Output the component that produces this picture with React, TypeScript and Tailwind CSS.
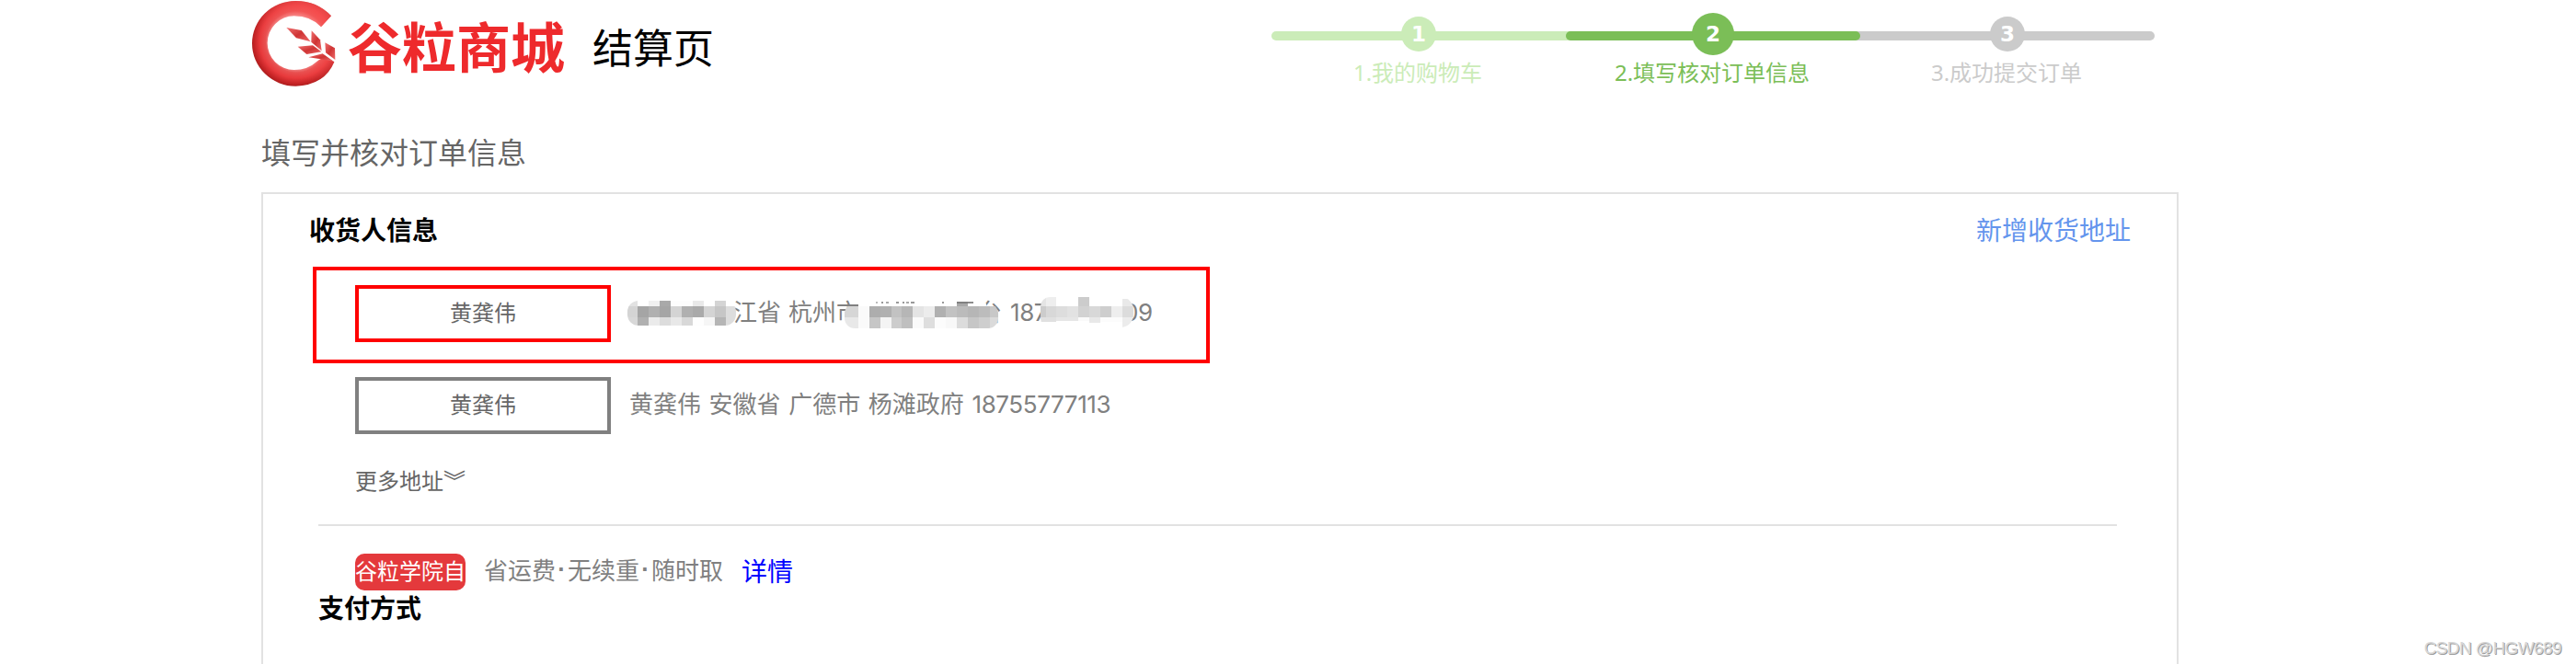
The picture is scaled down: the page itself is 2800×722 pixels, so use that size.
import React from "react";

const CJK = "font-['Noto_Sans_CJK_SC',sans-serif]";
const MIXED = "font-['Inter','Noto_Sans_CJK_SC',sans-serif]";

function LogoMark() {
  return (
    <svg className="h-[100px] w-[98px] shrink-0" viewBox="0 0 294 300">
      <defs>
        <radialGradient id="ring" gradientUnits="userSpaceOnUse" cx="162" cy="136" r="148">
          <stop offset="0.58" stopColor="#f29a9a" />
          <stop offset="0.68" stopColor="#e85050" />
          <stop offset="0.8" stopColor="#e83a3c" />
          <stop offset="0.92" stopColor="#c62426" />
          <stop offset="1" stopColor="#a81c1c" />
        </radialGradient>
        <linearGradient id="shine" x1="0" y1="1" x2="1" y2="0">
          <stop offset="0.35" stopColor="#ff5a5a" stopOpacity="0" />
          <stop offset="1" stopColor="#ff5a5a" stopOpacity="0.75" />
        </linearGradient>
        <linearGradient id="leaf" x1="0" y1="0" x2="1" y2="1">
          <stop offset="0" stopColor="#f07070" />
          <stop offset="0.5" stopColor="#cf3434" />
          <stop offset="1" stopColor="#ee6a6a" />
        </linearGradient>
      </defs>
      {["url(#ring)", "url(#shine)"].map((fill) => (
        <path
          key={fill}
          fill={fill}
          d="M276 52 Q230 3 160 3 A142 139 0 0 0 18 142 A142 139 0 0 0 160 281 Q255 278 286 202 L262 189 Q240 189 228 202 Q200 228 155 228 A87 88 0 0 1 68 140 A87 88 0 0 1 155 52 Q210 52 243 88 Z"
        />
      ))}
      <g fill="url(#leaf)">
        <path d="M130 90 L179 99 L209 136 L162 124 Z" />
        <path d="M212 100 L240 130 L245 166 L211 137 Z" />
        <path d="M167 152 L216 148 L244 169 L196 177 Z" />
        <path d="M256 139 L288 157 L289 195 L258 172 Z" />
        <path d="M202 187 L248 175 L284 200 L238 192 Z" />
      </g>
    </svg>
  );
}

type StepProps = { n: number; label: string; bar: string; circle: string; text: string };

function Step({ n, label, bar, circle, text }: StepProps) {
  return (
    <li className="relative flex w-[320px] flex-col items-center pt-[14px]">
      <span className={`absolute top-[34px] h-[10px] ${bar}`} />
      <span className="relative flex h-[46px] items-center">
        <span
          className={`flex items-center justify-center rounded-full font-['DejaVu_Sans',sans-serif] text-[23px] font-bold leading-none text-white ${circle}`}
        >
          {n}
        </span>
      </span>
      <span className={`relative -left-px font-['Noto_Sans','Noto_Sans_CJK_SC',sans-serif] text-[24px] leading-[38px] whitespace-nowrap ${text}`}>
        {label}
      </span>
    </li>
  );
}

type Cell = [number, number, number, number, string];

const MASK_A: Cell[] = [
  [0, 0, 11, 6, "#e2e2e2"], [11, 0, 12, 6, "#fff"], [23, 0, 12, 6, "#f0f0f0"], [35, 0, 12, 6, "#a9a9a9"], [47, 0, 24, 6, "#fdfdfd"], [71, 0, 12, 6, "#e9e9e9"], [83, 0, 12, 6, "#fff"], [95, 0, 12, 6, "#d4d4d4"], [107, 0, 11, 6, "#fff"],
  [0, 6, 11, 12, "#d4d4d4"], [11, 6, 12, 12, "#a5a5a5"], [23, 6, 12, 12, "#b0b0b0"], [35, 6, 12, 12, "#a5a5a5"], [47, 6, 12, 12, "#d4d4d4"], [59, 6, 12, 12, "#b0b0b0"], [71, 6, 12, 12, "#aaaaaa"], [83, 6, 12, 12, "#d4d4d4"], [95, 6, 12, 12, "#c6c6c6"], [107, 6, 11, 12, "#dddddd"],
  [0, 18, 11, 9, "#d8d8d8"], [11, 18, 12, 9, "#b0b0b0"], [23, 18, 12, 9, "#ebebeb"], [35, 18, 12, 9, "#dcdcdc"], [47, 18, 12, 9, "#e8e8e8"], [59, 18, 12, 9, "#d8d8d8"], [71, 18, 12, 9, "#fefefe"], [83, 18, 12, 9, "#f6f6f6"], [95, 18, 12, 9, "#b5b5b5"], [107, 18, 11, 9, "#dddddd"],
];

const MASK_B: Cell[] = [
  [15, 0, 107, 3, "#fff"], [122, 0, 12, 3, "#a8a8a8"], [134, 0, 20, 3, "#fff"],
  [0, 3, 15, 12, "#d6d6d6"], [15, 3, 12, 12, "#fafafa"], [27, 3, 12, 12, "#adadad"], [39, 3, 12, 12, "#b0b0b0"], [51, 3, 11, 12, "#c2c2c2"], [62, 3, 12, 12, "#b6b6b6"], [74, 3, 12, 12, "#e4e4e4"], [86, 3, 12, 12, "#ececec"], [98, 3, 12, 12, "#b0b0b0"], [110, 3, 12, 12, "#c2c2c2"], [122, 3, 12, 12, "#bbbbbb"], [134, 3, 12, 12, "#b6b6b6"], [146, 3, 12, 12, "#bcbcbc"], [158, 3, 9, 12, "#c8c8c8"],
  [0, 15, 15, 12, "#e8e8e8"], [15, 15, 12, 12, "#fafafa"], [27, 15, 12, 12, "#c6c6c6"], [39, 15, 12, 12, "#f4f4f4"], [51, 15, 11, 12, "#cccccc"], [62, 15, 12, 12, "#bfbfbf"], [74, 15, 12, 12, "#fafafa"], [86, 15, 12, 12, "#dedede"], [98, 15, 12, 12, "#fcfcfc"], [110, 15, 12, 12, "#f8f8f8"], [122, 15, 12, 12, "#dcdcdc"], [134, 15, 12, 12, "#c6c6c6"], [146, 15, 12, 12, "#cecece"], [158, 15, 9, 12, "#dadada"],
];

const MASK_C: Cell[] = [
  [0, 0, 6, 10, "#e4e4e4"], [6, 0, 11, 10, "#eeeeee"], [17, 0, 24, 10, "#fff"], [41, 0, 12, 10, "#cccccc"], [53, 0, 36, 10, "#fff"], [89, 2, 12, 8, "#e9e9e9"],
  [0, 10, 6, 12, "#cccccc"], [6, 10, 11, 12, "#d8d8d8"], [17, 10, 12, 12, "#dddddd"], [29, 10, 12, 12, "#e2e2e2"], [41, 10, 12, 12, "#d2d2d2"], [53, 10, 12, 12, "#d8d8d8"], [65, 10, 12, 12, "#cecece"], [77, 10, 12, 12, "#eeeeee"], [89, 10, 12, 12, "#dcdcdc"],
  [0, 22, 17, 5, "#e0e0e0"], [17, 22, 24, 4, "#e6e6e6"], [41, 22, 12, 4, "#fafafa"], [53, 22, 12, 6, "#e8e8e8"], [65, 22, 24, 5, "#fcfcfc"], [89, 22, 12, 11, "#ececec"],
];

/* Stroke tips that stay visible above the second mask. */
const TIPS: Cell[] = [
  [34, 0, 2, 2, "#bbb"], [40, 0, 2, 2, "#999"], [45, 0, 3, 2, "#aaa"], [56, 0, 3, 2, "#999"], [63, 0, 2, 2, "#999"], [67, 0, 3, 2, "#aaa"], [72, 0, 4, 2, "#999"],
  [106, 0, 2, 2, "#999"], [122, 0, 12, 2, "#808080"], [134, 0, 6, 2, "#8c8c8c"],
];

function Mosaic({ cells, width, height, className }: { cells: Cell[]; width: number; height: number; className: string }) {
  return (
    <svg className={`absolute overflow-hidden ${className}`} width={width} height={height} shapeRendering="crispEdges">
      {cells.map(([x, y, w, h, fill]) => (
        <rect key={`${x}-${y}`} x={x} y={y} width={w} height={h} fill={fill} />
      ))}
    </svg>
  );
}

function NameBox({ color }: { color: string }) {
  return (
    <div className={`h-[62px] w-[278px] shrink-0 border-4 text-center text-[24px] leading-[50px] text-[#666] ${CJK} ${color}`}>
      黄龚伟
    </div>
  );
}

export default function App() {
  return (
    <div className={`relative h-[722px] w-[2800px] overflow-hidden bg-white text-black ${CJK}`}>
      <header className="flex h-[100px] pl-[268px]">
        <LogoMark />
        <div className="ml-[12px] w-[237px] text-[59px] font-bold leading-[97px] whitespace-nowrap text-[#ee2a2c]">谷粒商城</div>
        <h1 className="ml-[29px] w-[140px] text-[44px] leading-[101px] whitespace-nowrap">结算页</h1>
        <ol className="ml-[598px] flex">
          <Step n={1} label="1.我的购物车" bar="left-0 w-[330px] rounded-l-full bg-[#cbecb8]" circle="size-[38px] bg-[#cbecb8]" text="text-[#cbecb8]" />
          <Step n={2} label="2.填写核对订单信息" bar="left-0 z-10 w-[320px] rounded-full bg-[#7bbe57]" circle="z-20 size-[46px] bg-[#7bbe57]" text="text-[#7bbe57]" />
          <Step n={3} label="3.成功提交订单" bar="right-0 w-[330px] rounded-r-full bg-[#cbcbcb]" circle="size-[38px] bg-[#cbcbcb]" text="text-[#cbcbcb]" />
        </ol>
      </header>

      <h2 className="mt-[41px] ml-[284px] h-[68px] text-[32px] leading-[46px] text-[#666]">填写并核对订单信息</h2>

      <main className="ml-[284px] h-[600px] w-[2084px] border-2 border-[#e2e2e2]">
        <div className="flex h-[79px] justify-between pr-[50px] pl-[50px] text-[28px] leading-[77px]">
          <h3 className="font-bold">收货人信息</h3>
          <a className="text-[#6495ed]">新增收货地址</a>
        </div>

        <section className="ml-[54px] flex h-[105px] w-[975px] border-4 border-[#f00] pt-[16px] pl-[42px]">
          <NameBox color="border-[#f00]" />
          <div className={`relative ml-[20px] h-[60px] text-[26px] leading-[60px] text-[#808080] ${MIXED}`}>
            <div className="flex whitespace-nowrap">
              <span className="ml-[113px] w-[60px]">江省</span>
              <span className="w-[206px]">杭州市</span>
              <span className="w-[35px]">台</span>
              <span className="w-[123px] tracking-[-0.4px]">187</span>
              <span className="tracking-[-0.4px]">09</span>
            </div>
            <Mosaic cells={MASK_A} width={118} height={27} className="top-[17px] -left-[2px] rounded-[12px]" />
            <Mosaic cells={MASK_B} width={167} height={27} className="top-[20px] left-[234px] rounded-[11px]" />
            <Mosaic cells={TIPS} width={167} height={2} className="top-[18px] left-[234px]" />
            <Mosaic cells={MASK_C} width={101} height={33} className="top-[13px] left-[447px] rounded-l-[10px] rounded-r-[14px]" />
          </div>
        </section>

        <section className="mt-[15px] flex h-[62px] pl-[100px]">
          <NameBox color="border-[#808080]" />
          <p className={`ml-[20px] text-[26px] leading-[60px] whitespace-nowrap text-[#808080] [word-spacing:1.3px] ${MIXED}`}>
            黄龚伟 安徽省 广德市 杨滩政府 <span className="tracking-[-0.4px]">18755777113</span>
          </p>
        </section>

        <p className="mt-[28px] ml-[100px] h-[70px] text-[24px] leading-[43px] text-[#666]">更多地址︾</p>
        <hr className="mr-[65px] ml-[60px] border-0 border-t-2 border-[#e2e2e2]" />

        <div className="mt-[30px] flex h-[40px] pl-[100px]">
          <span className="h-[40px] w-[120px] rounded-[10px] bg-[#e4393c] text-[24px] leading-[36px] whitespace-nowrap text-white">谷粒学院自</span>
          <span className="ml-[20px] flex text-[26px] leading-[34px] text-[#808080]">
            <span>省运费</span>
            <span className="w-[13px] text-center font-['Liberation_Sans',sans-serif] font-bold">·</span>
            <span>无续重</span>
            <span className="w-[13px] text-center font-['Liberation_Sans',sans-serif] font-bold">·</span>
            <span>随时取</span>
          </span>
          <a className="ml-[20px] text-[28px] leading-[36px] text-[#00f]">详情</a>
        </div>
        <h3 className="ml-[60px] text-[28px] font-bold leading-[36px]">支付方式</h3>
      </main>

      <span className="absolute right-[16px] bottom-[5px] font-['Liberation_Sans',sans-serif] text-[19px] leading-[24px] tracking-[-0.6px] text-[#d8d8d8] [text-shadow:1px_1px_0_#999]">
        CSDN @HGW689
      </span>
    </div>
  );
}
